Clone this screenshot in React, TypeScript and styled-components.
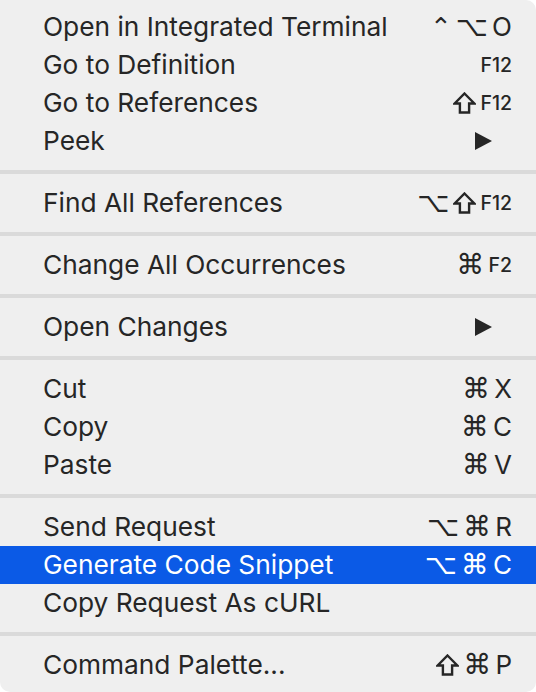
import React from "react"
import styled, { createGlobalStyle } from "styled-components"

const GlobalStyle = createGlobalStyle`
    html, body {
        margin: 0;
        padding: 0;
        background: #ffffff;
    }
`

const MenuStyled = styled.div`
    width: 536px;
    height: 692px;
    box-sizing: border-box;
    padding: 8px 0;
    background-color: #efefef;
    border-radius: 0 10px 10px 10px;
    font-family: "Inter", "Liberation Sans", sans-serif;
    color: #262626;
    overflow: hidden;
`

const ItemStyled = styled.div<{ $active?: boolean }>`
    display: flex;
    align-items: center;
    justify-content: space-between;
    height: 38px;
    padding: 0 24px 1px 43px;
    box-sizing: border-box;
    font-size: 26.3px;
    background-color: ${({ $active }) => ($active ? "#0b5ae6" : "transparent")};
    color: ${({ $active }) => ($active ? "#ffffff" : "#262626")};
`

const LabelStyled = styled.span`
    white-space: nowrap;
`

const ShortcutStyled = styled.span`
    display: flex;
    align-items: center;
    gap: 4px;
    font-size: 26px;
`

const KeyGlyph = styled.span<{ $size?: number }>`
    font-family: "DejaVu Sans", sans-serif;
    font-size: ${({ $size }) => $size ?? 28}px;
    line-height: 1;
`

const ShiftIcon = styled.svg`
    width: 23px;
    height: 22px;
    fill: none;
    stroke: currentColor;
    stroke-width: 2.3;
    stroke-linejoin: miter;
`

const FnKey = styled.span`
    font-size: 19.5px;
    font-weight: 500;
`

const ArrowStyled = styled.svg`
    width: 17px;
    height: 18px;
    margin-right: 20px;
    fill: currentColor;
`

const SeparatorStyled = styled.div`
    height: 4px;
    margin: 10px 0;
    background-color: #dadada;
`

type Item = {
    label: string
    keys?: string[]
    fn?: string
    submenu?: boolean
    active?: boolean
}

const groups: Item[][] = [
    [
        { label: "Open in Integrated Terminal", keys: ["⌃", "⌥", "O"] },
        { label: "Go to Definition", fn: "F12" },
        { label: "Go to References", keys: ["⇧"], fn: "F12" },
        { label: "Peek", submenu: true },
    ],
    [{ label: "Find All References", keys: ["⌥", "⇧"], fn: "F12" }],
    [{ label: "Change All Occurrences", keys: ["⌘"], fn: "F2" }],
    [{ label: "Open Changes", submenu: true }],
    [
        { label: "Cut", keys: ["⌘", "X"] },
        { label: "Copy", keys: ["⌘", "C"] },
        { label: "Paste", keys: ["⌘", "V"] },
    ],
    [
        { label: "Send Request", keys: ["⌥", "⌘", "R"] },
        { label: "Generate Code Snippet", keys: ["⌥", "⌘", "C"], active: true },
        { label: "Copy Request As cURL" },
    ],
    [{ label: "Command Palette...", keys: ["⇧", "⌘", "P"] }],
]

// glyph sizes tuned per symbol so they read like the mac menu glyphs
const glyphSize: Record<string, number> = { "⌃": 26, "⌥": 28, "⌘": 28 }

const Key = ({ k }: { k: string }) => {
    if (k === "⇧") {
        return (
            <ShiftIcon viewBox="0 0 22 21" aria-label="Shift">
                <path d="M11 1.4 L20.4 11 H15.4 V19.6 H6.6 V11 H1.6 Z" />
            </ShiftIcon>
        )
    }
    if (glyphSize[k]) return <KeyGlyph $size={glyphSize[k]}>{k}</KeyGlyph>
    return <span>{k}</span>
}

const MenuItem = ({ item }: { item: Item }) => (
    <ItemStyled $active={item.active}>
        <LabelStyled>{item.label}</LabelStyled>
        {item.submenu ? (
            <ArrowStyled viewBox="0 0 17 18">
                <polygon points="0,0 17,9 0,18" />
            </ArrowStyled>
        ) : (
            <ShortcutStyled>
                {item.keys?.map((k, i) => <Key key={i} k={k} />)}
                {item.fn && <FnKey>{item.fn}</FnKey>}
            </ShortcutStyled>
        )}
    </ItemStyled>
)

export default function App() {
    return (
        <>
            <GlobalStyle />
            <MenuStyled>
                {groups.map((group, gi) => (
                    <React.Fragment key={gi}>
                        {gi > 0 && <SeparatorStyled />}
                        {group.map((item) => (
                            <MenuItem key={item.label} item={item} />
                        ))}
                    </React.Fragment>
                ))}
            </MenuStyled>
        </>
    )
}
